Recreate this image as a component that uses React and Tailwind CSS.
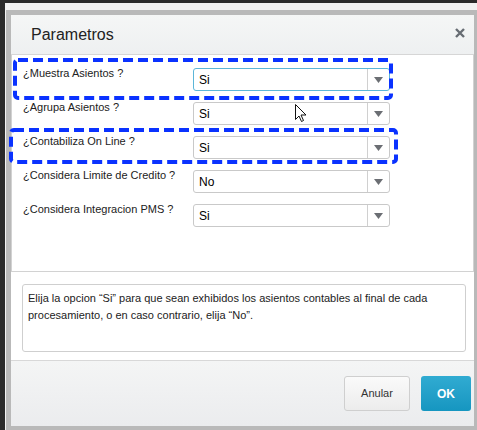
import React from "react";

const rows = [
  { label: "¿Muestra Asientos ?", value: "Si", focus: true },
  { label: "¿Agrupa Asientos ?", value: "Si" },
  { label: "¿Contabiliza On Line ?", value: "Si" },
  { label: "¿Considera Limite de Credito ?", value: "No" },
  { label: "¿Considera Integracion PMS ?", value: "Si" },
];

function Select({ value, focus }) {
  return (
    <div
      className={
        "flex h-[23px] w-[197px] items-stretch rounded-[3px] border bg-white " +
        (focus ? "border-[#5cb6d8]" : "border-[#c9c9c9]")
      }
    >
      <div className="flex flex-1 items-center pl-[5px] text-[12px] text-black">{value}</div>
      <div className="flex w-[22px] items-center justify-center border-l border-[#d0d0d0]">
        <svg width="9" height="6" viewBox="0 0 9 6">
          <path d="M0 0 H9 L4.5 6 Z" fill="#6b6e73" />
        </svg>
      </div>
    </div>
  );
}

export default function App() {
  return (
    <div
      className="relative h-[430px] w-[477px] overflow-hidden bg-[#2b2b2b] pl-[5px] pt-[3px]"
      style={{ fontFamily: '"Liberation Sans", Arial, sans-serif' }}
    >
      <div className="h-full bg-[#f2f2f2] pl-[1px] pt-[7px]">
        <div className="flex h-full flex-col bg-[#b9b9b9] pb-[4px] pl-[5px] pr-[3px] pt-[5px]">
          {/* DIALOG */}
          <div className="flex flex-1 flex-col bg-white">
            {/* HEADER */}
            <div className="flex h-[40px] shrink-0 items-center justify-between border-b border-[#d6d6d6] bg-gradient-to-b from-[#f5f6f6] to-[#eef0f1] pl-[20px] pr-[9px]">
              <span className="pt-[1px] text-[16px] text-[#222]">Parametros</span>
              <svg width="10" height="10" viewBox="0 0 10 10" className="mt-[-4px]">
                <path d="M1 1 L9 9 M9 1 L1 9" stroke="#676c73" strokeWidth="2.4" />
              </svg>
            </div>

            {/* FORM PANEL */}
            <div className="flex h-[217px] shrink-0 flex-col gap-[11px] border-b border-l border-r border-[#d2d2d2] pl-[11px] pt-[13px]">
              {rows.map((r) => (
                <div key={r.label} className="flex items-start">
                  <div className="mt-[-2px] w-[170px] text-[11px] leading-[14px] text-[#222]">{r.label}</div>
                  <Select value={r.value} focus={r.focus} />
                </div>
              ))}
            </div>

            {/* HELP TEXT */}
            <div className="flex h-[88px] shrink-0 items-start pl-[11px] pr-[8px] pt-[12px]">
              <div className="h-[68px] flex-1 rounded-[3px] border border-[#cfcfcf] px-[5px] pt-[5px] text-[11px] leading-[17px] text-[#222]">
                Elija la opcion “Si” para que sean exhibidos los asientos contables al final de cada procesamiento, o en caso contrario, elija “No”.
              </div>
            </div>

            {/* FOOTER */}
            <div className="flex flex-1 items-start justify-end gap-[11px] border-t border-[#d8d8d8] bg-gradient-to-b from-[#f4f5f5] to-[#ebecee] pr-[3px] pt-[15px]">
              <button className="h-[35px] w-[66px] rounded-[3px] border border-[#cfcfcf] bg-gradient-to-b from-[#fafafa] to-[#ececec] text-[11px] text-[#333]">
                Anular
              </button>
              <button className="h-[35px] w-[50px] rounded-[3px] bg-gradient-to-b from-[#30abd2] to-[#1596c0] text-[12px] font-bold text-white">
                OK
              </button>
            </div>
          </div>
        </div>
      </div>

      {/* ANNOTATIONS OVERLAY */}
      <svg className="pointer-events-none absolute left-0 top-0" width="477" height="430">
        <rect x="15" y="60" width="376" height="38" rx="3" fill="none" stroke="#0a32ff" strokeWidth="4" strokeDasharray="10 5" />
        <rect x="11" y="130" width="385" height="32" rx="3" fill="none" stroke="#0a32ff" strokeWidth="4" strokeDasharray="10 5" />
        <path
          d="M295.5 104.5 V119.5 L299 116 L301.5 121.5 L303.5 120.5 L301 115 L306 115 Z"
          fill="white"
          stroke="#111"
          strokeWidth="1"
        />
      </svg>
    </div>
  );
}
